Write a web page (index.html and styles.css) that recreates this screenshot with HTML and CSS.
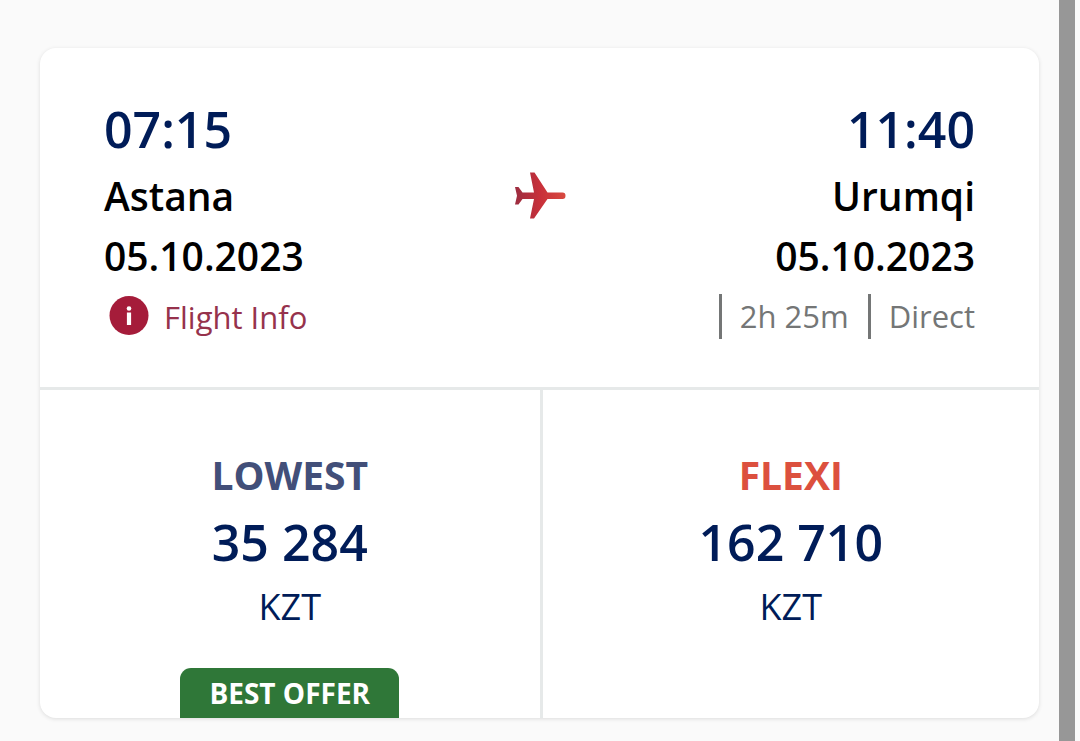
FILE: index.html
```html
<!DOCTYPE html>
<html lang="en">
<head>
<meta charset="utf-8">
<meta name="viewport" content="width=device-width, initial-scale=1">
<title>Astana – Urumqi</title>
<link rel="stylesheet" href="styles.css">
</head>
<body>
<main class="page">
  <article class="card">
    <section class="route">
      <div class="stop">
        <time class="clock">07:15</time>
        <span class="city">Astana</span>
        <time class="date" datetime="2023-10-05">05.10.2023</time>
        <a class="info" href="#flight-info">
          <svg class="info-icon" viewBox="0 0 40 40" aria-hidden="true">
            <circle cx="20" cy="18.500" r="19.500" fill="#a51c3a"/>
            <circle cx="20" cy="11.500" r="2.300" fill="#fff"/>
            <path d="M17.900 15.500H22.100V28H17.900Z" fill="#fff"/>
          </svg>
          <span>Flight Info</span>
        </a>
      </div>
      <svg class="plane" viewBox="0 0 52 48" aria-hidden="true">
        <defs>
          <linearGradient id="plane-fill" x1="0" y1="0" x2="1" y2="0">
            <stop offset="0" stop-color="#9c2d40"/>
            <stop offset="0.5" stop-color="#c8303a"/>
            <stop offset="1" stop-color="#d84a40"/>
          </linearGradient>
        </defs>
        <path d="M1 15H4.500L8.500 20.500H20L16 0.500H20.500L33.500 20.500H48.500Q51.500 20.500 51.500 23.700T48.500 27H33.500L20 46.500H16L20 27H8.500L4.500 32.500H1L3 23.700Z" fill="url(#plane-fill)"/>
      </svg>
      <div class="stop stop-end">
        <time class="clock">11:40</time>
        <span class="city">Urumqi</span>
        <time class="date" datetime="2023-10-05">05.10.2023</time>
        <div class="facts"><span class="fact">2h 25m</span><span class="fact">Direct</span></div>
      </div>
    </section>
    <section class="fares">
      <button class="fare" type="button">
        <span class="fare-name lowest">LOWEST</span>
        <span class="price">35 284</span>
        <span class="currency">KZT</span>
        <span class="badge">BEST OFFER</span>
      </button>
      <button class="fare" type="button">
        <span class="fare-name flexi">FLEXI</span>
        <span class="price">162 710</span>
        <span class="currency">KZT</span>
      </button>
    </section>
  </article>
</main>
<div class="scroll-thumb"></div>
</body>
</html>
```
FILE: styles.css
```css
* {
  box-sizing: border-box;
}

body {
  display: flex;
  min-height: 100vh;
  margin: 0;
  background: #fafafa;
  font-family: "Open Sans", "Noto Sans", sans-serif;
}

.page {
  flex: 1;
  padding: 48px 20px 22px 40px;
}

.scroll-thumb {
  width: 16px;
  margin-right: 5px;
  background: #979797;
}

.card {
  overflow: hidden;
  border-radius: 16px;
  background: #fff;
  box-shadow: 0 1px 4px rgba(0, 0, 0, 0.12);
}

.route {
  display: grid;
  grid-template-columns: 1fr 52px 1fr;
  padding: 48px 64px;
  border-bottom: 3px solid #e6e9e9;
}

.stop {
  display: flex;
  flex-direction: column;
  align-items: flex-start;
}

.stop-end {
  align-items: flex-end;
}

.clock,
.price {
  color: #001c58;
  font-size: 50px;
  font-weight: 600;
  line-height: 66px;
}

.clock {
  margin-bottom: 4px;
}

.city,
.date {
  color: #000;
  font-size: 39px;
  font-weight: 600;
  line-height: 60px;
}

.info,
.facts {
  display: flex;
  align-items: center;
  height: 45px;
  margin-top: 8px;
  font-size: 31px;
}

.info {
  gap: 15px;
  padding-left: 5px;
  color: #96324c;
  text-decoration: none;
}

.info-icon {
  overflow: visible;
  width: 40px;
  height: 40px;
}

.facts {
  gap: 19px;
  color: #747676;
}

.fact {
  padding-left: 18px;
  border-left: 3px solid #747676;
  line-height: 45px;
}

.plane {
  width: 52px;
  height: 48px;
  margin-top: 76px;
}

.fares {
  display: grid;
  grid-template-columns: 1fr 1fr;
}

.fare {
  display: flex;
  flex-direction: column;
  align-items: center;
  padding: 55px 0 0;
  border: 0;
  background: none;
  font-family: inherit;
  cursor: pointer;
}

.fare + .fare {
  border-left: 3px solid #e6e9e9;
}

.fare-name {
  margin-bottom: 4px;
  font-size: 39px;
  font-weight: 700;
  line-height: 60px;
}

.lowest {
  color: #424f79;
}

.flexi {
  color: #dc503e;
}

.currency {
  margin-top: 7px;
  color: #001c58;
  font-size: 36px;
  line-height: 50px;
}

.badge {
  margin-top: 36px;
  padding: 0 29px;
  border-radius: 11px 11px 0 0;
  background: #2f7738;
  color: #fff;
  font-size: 28px;
  font-weight: 700;
  line-height: 50px;
}
```
